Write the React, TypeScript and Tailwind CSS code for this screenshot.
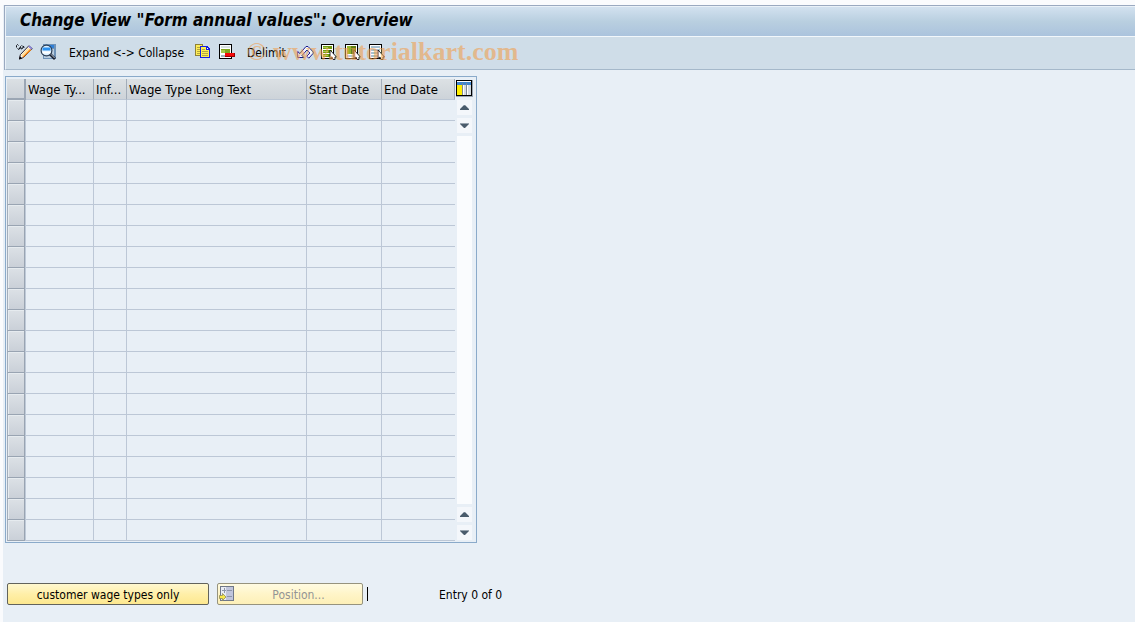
import type { ReactNode } from "react";

const columns = [
  { label: "Wage Ty...", width: "w-[68px]" },
  { label: "Inf...", width: "w-[33px]" },
  { label: "Wage Type Long Text", width: "w-[180px]" },
  { label: "Start Date", width: "w-[75px]" },
  { label: "End Date", width: "w-[73px]" },
];

const rows = Array.from({ length: 21 }, (_, i) => i);

function Icon({ children }: { children: ReactNode }) {
  return (
    <svg width="16" height="16" viewBox="0 0 16 16" shapeRendering="crispEdges" aria-hidden="true" className="block shrink-0">
      {children}
    </svg>
  );
}

function ChangeIcon() {
  return (
    <svg width="17" height="16" viewBox="0 0 17 16" aria-hidden="true" className="block shrink-0">
      <path d="M.5 3.500v-2l1-1 1 1M1.500 4.500l1.500 1 1.500-3 .5 2.500 1.500-.5 1-2.500L8 4M5.500 1.500l1 .5" fill="none" stroke="#10141c" />
      <path d="M3.500 15l.8-4.300L12.800 1.800l3.400 2.700-8.700 9z" fill="#fff" stroke="#2a2030" strokeWidth="1" />
      <path d="M6.300 12.800l7.500-7.900 1.500 1L7.300 13.600z" fill="#ff8c10" />
      <path d="M4.900 11.300l7.300-7.600 1.300 1.100-7.200 7.500z" fill="#ffdf98" />
      <path d="M12.300 3l1.200-1.500L16.200 4 15 5.400z" fill="#8c88dc" />
      <path d="M3 15.500l.8-3.200 2.400 2z" fill="#000" />
    </svg>
  );
}

function DetailIcon() {
  return (
    <svg width="16" height="16" viewBox="0 0 16 16" aria-hidden="true" className="block shrink-0">
      <path d="M3 0h13v15H3z" fill="#6f93b8" />
      <path d="M4 1h10v3H4z" fill="#2f7fd6" />
      <path d="M4 5h10v9H4z" fill="#b9cddf" />
      <circle cx="6.500" cy="6.500" r="5.400" fill="#d9efff" stroke="#2c3e54" strokeWidth="1.200" />
      <path d="M2.500 3.500h8v3h-8z" fill="#2c92f0" />
      <path d="M2.500 7.500h8v2h-8z" fill="#fff" />
      <path d="M10.200 10.200l4.800 4.800" stroke="#141c2c" strokeWidth="2.800" />
      <path d="M10.800 10.200l4 4" stroke="#eef6ff" strokeWidth=".8" />
    </svg>
  );
}

function CopyIcon() {
  return (
    <Icon>
      <path d="M0 0h8v12H0z" fill="#8f8238" />
      <path d="M1 1h6v10H1z" fill="#ffee58" />
      <path d="M2 3h3v1H2zM2 5h3v1H2zM2 7h3v1H2zM2 9h3v1H2z" fill="#b5a63c" />
      <path d="M5 2h7l3 3v9H5z" fill="#1520e0" />
      <path d="M6 3h5v3h3v7H6z" fill="#fff04c" />
      <path d="M12 4h1v1h-1z" fill="#fff" />
      <path d="M7 5h3v1H7zM7 7h6v1H7zM7 9h6v1H7zM7 11h6v1H7z" fill="#b0a648" />
    </Icon>
  );
}

function DeleteIcon() {
  return (
    <Icon>
      <path d="M0 0h13v15H0z" />
      <path d="M1 1h11v13H1z" fill="#fff" />
      <path d="M2 2h9v2H2z" fill="#d7e0e0" />
      <path d="M2 5h9v4H2z" fill="#7fa61e" />
      <path d="M2 6h4v3H2z" fill="#a6c94a" />
      <path d="M2 11h4v2H2z" fill="#9eb4bc" />
      <path d="M6 9h10v4H6z" fill="#900" />
      <path d="M6 9h9v3H6z" fill="#f50a0a" />
    </Icon>
  );
}

function UndoIcon() {
  return (
    <svg width="17" height="16" viewBox="0 0 17 16" aria-hidden="true" className="block shrink-0">
      <path
        d="M.7 7.500v6h6.300L5 11.500 9.900 6l3 3-3.100 3.200 2 2L16.300 9.200V8L11 2.500H9L2.900 9.500z"
        fill="#f4f6fc"
        stroke="#16188c"
      />
    </svg>
  );
}

function Pointer() {
  return <path d="M9 6v8.500l2-1.500 1 2.500h2V13h1.500z" fill="#fff" stroke="#111" strokeWidth=".9" shapeRendering="auto" />;
}

function Sheet() {
  return (
    <>
      <path d="M0 0h13v15H0z" />
      <path d="M1 1h11v13H1z" fill="#fff" />
    </>
  );
}

function SelectAllIcon() {
  return (
    <Icon>
      <Sheet />
      <path d="M2 2h9v3H2zM2 6h9v3H2zM2 10h9v3H2z" fill="#6f9a10" />
      <path d="M2 3h5v1H2zM2 7h5v1H2zM2 11h5v1H2z" fill="#a9cf55" />
      <Pointer />
    </Icon>
  );
}

function SelectBlockIcon() {
  return (
    <Icon>
      <Sheet />
      <path d="M2 2h9v8H2z" fill="#5f7e10" />
      <path d="M2 2h4v8H2z" fill="#94b42c" />
      <path d="M2 11h9v2H2z" fill="#b6cbd8" />
      <Pointer />
    </Icon>
  );
}

function DeselectIcon() {
  return (
    <Icon>
      <Sheet />
      <path d="M2 2h9v2H2zM2 5h9v2H2zM2 8h9v2H2zM2 11h9v2H2z" fill="#a6bfd0" />
      <Pointer />
    </Icon>
  );
}

function ConfigureIcon() {
  return (
    <Icon>
      <path d="M0 0h16v16H0z" />
      <path d="M1 1h14v14H1z" fill="#fff" />
      <path d="M1 2h14v3H1z" fill="#3f86d0" />
      <path d="M1 5h5v10H1z" fill="#ffee00" />
      <path d="M6 3h1v12H6zM10 3h1v12h-1z" fill="#7d8894" />
      <path d="M8 5h2v10H8zM12 5h3v10h-3z" fill="#d4dbe2" />
    </Icon>
  );
}

function PositionIcon() {
  return (
    <Icon>
      <path d="M1 0h14v15H1z" fill="#707888" />
      <path d="M2 1h12v13H2z" fill="#c0c5dc" />
      <path d="M2 1h5v13H2z" fill="#e8ecf4" />
      <path d="M3 4h4v1H3zM8 4h5v1H8zM8 10h5v1H8zM5 2h1v5H5z" fill="#8d95a9" />
      <path d="M.5 9.500h3v-2l3.500 3.500-3.500 3.500v-2h-3z" fill="#f7e84a" stroke="#8f8a58" strokeWidth=".8" shapeRendering="auto" />
    </Icon>
  );
}

function ToolButton({ label, children }: { label: string; children: ReactNode }) {
  return (
    <button type="button" aria-label={label} className="flex h-4 w-4 shrink-0 items-center">
      {children}
    </button>
  );
}

function ScrollButton({ up, label }: { up?: boolean; label: string }) {
  return (
    <button type="button" aria-label={label} className="flex h-[15px] w-[15px] shrink-0 items-center justify-center bg-[#f4f7fb]">
      <svg width="9" height="5" viewBox="0 0 9 5" aria-hidden="true">
        <path d={up ? "M0 5V4l4-4h1l4 4v1z" : "M0 0v1l4 4h1l4-4V0z"} fill="#4a5c6c" />
        <path d={up ? "M0 4l4-4h1l4 4" : "M0 .500h9"} fill="none" stroke="#a9b4be" strokeWidth=".8" />
      </svg>
    </button>
  );
}

export default function App() {
  return (
    <div className="min-h-screen bg-[#fafbfd] pl-[3px] pt-[5px] font-['DejaVu_Sans_Condensed','DejaVu_Sans',sans-serif] text-[12px] leading-4 text-black">
      <div className="min-h-[617px] bg-[#e8eff6] pl-px">
        <header className="border-l border-t border-[#9aa9c0]">
          <div className="flex h-[30px] items-center border-l border-t border-[#e9f1f8] bg-linear-to-b from-[#d2e1ef] via-[#b9cfe0] to-[#abc3dd] pb-1 pl-[14px]">
            <h1 className="text-[17px] font-bold italic leading-5">Change View "Form annual values": Overview</h1>
          </div>
          <div
            role="toolbar"
            className="relative flex h-[34px] items-center border-b border-l border-t border-b-[#a5b8ca] border-l-[#e9f1f8] border-t-[#f2f7fb] bg-[#cfdde8] pb-[2px] pl-[10px]"
          >
            <div className="flex items-center gap-2">
              <ToolButton label="Display/Change"><ChangeIcon /></ToolButton>
              <ToolButton label="Details"><DetailIcon /></ToolButton>
            </div>
            <button type="button" className="ml-[13px] w-[114px] whitespace-nowrap pt-[2px] text-left">Expand &lt;-&gt; Collapse</button>
            <div className="ml-3 flex items-center gap-2">
              <ToolButton label="Copy As"><CopyIcon /></ToolButton>
              <ToolButton label="Delete"><DeleteIcon /></ToolButton>
            </div>
            <button type="button" className="ml-3 w-[38px] whitespace-nowrap pt-[2px] text-left">Delimit</button>
            <div className="ml-3 flex items-center gap-2">
              <ToolButton label="Undo"><UndoIcon /></ToolButton>
              <ToolButton label="Select All"><SelectAllIcon /></ToolButton>
              <ToolButton label="Select Block"><SelectBlockIcon /></ToolButton>
              <ToolButton label="Deselect All"><DeselectIcon /></ToolButton>
            </div>
            <span className="pointer-events-none absolute left-[241px] top-px whitespace-nowrap font-['Liberation_Serif',serif] text-[26px] font-bold leading-7 text-[#f0a050]/60">
              © www.tutorialkart.com
            </span>
          </div>
        </header>

        <main className="pl-px pt-[6px]">
          <div className="flex w-fit border border-[#8aaaca] pb-px pl-px pr-[3px] pt-[2px]">
            <table className="w-[448px] table-fixed border-separate border-spacing-0">
              <thead>
                <tr className="h-[21px]">
                  <th scope="col" aria-label="Selection" className="w-[19px] border-b-2 border-r-2 border-[#9ba6b4] bg-linear-to-b from-[#dbe0e4] to-[#cbd1d8] p-0" />
                  {columns.map((c) => (
                    <th
                      key={c.label}
                      scope="col"
                      className={`${c.width} overflow-hidden whitespace-nowrap border-b border-r border-b-[#bcc7d5] border-r-[#a3adb9] bg-linear-to-b from-[#dce1e4] to-[#cdd3d9] p-0 pl-[2px] pt-px text-left text-[13px] font-normal leading-4`}
                    >
                      {c.label}
                    </th>
                  ))}
                </tr>
              </thead>
              <tbody>
                {rows.map((r) => (
                  <tr key={r} className="h-[21px]">
                    <td className="border-r border-[#bfcad8] p-0">
                      <button
                        type="button"
                        aria-label={`Select row ${r + 1}`}
                        className="block h-[21px] w-full border-b border-l border-r border-b-[#99a4b2] border-l-[#a3adba] border-r-[#99a4b2] bg-linear-to-b from-[#dce1e6] to-[#cad0d8] shadow-[inset_1px_1px_0_#e6ebef]"
                      />
                    </td>
                    {columns.map((c, i) => (
                      <td
                        key={c.label}
                        className={`border-b border-[#bcc7d6] p-0 ${i < columns.length - 1 ? "border-r" : ""}`}
                      />
                    ))}
                  </tr>
                ))}
              </tbody>
            </table>
            <div className="ml-px flex w-[17px] flex-col items-center">
              <button type="button" aria-label="Table settings" className="mt-px h-[17px] w-[17px] shrink-0 border-b border-r border-[#99a4b2]">
                <ConfigureIcon />
              </button>
              <div className="mb-px mt-[3px] flex w-[15px] flex-1 flex-col gap-[3px]">
                <ScrollButton up label="Scroll up" />
                <ScrollButton label="Scroll down" />
                <div className="flex-1 bg-[#fafcfe]" />
                <ScrollButton up label="Page up" />
                <ScrollButton label="Page down" />
              </div>
            </div>
          </div>

          <div className="mt-10 flex items-center pl-[2px]">
            <button
              type="button"
              className="h-[22px] w-[202px] rounded-[2px] border border-[#62635c] bg-linear-to-b from-[#fff8cf] via-[#ffefa8] to-[#fde88f] pt-px leading-5"
            >
              customer wage types only
            </button>
            <button
              type="button"
              disabled
              className="ml-2 flex h-[22px] w-[146px] items-center rounded-[2px] border border-[#96937e] bg-linear-to-b from-[#fffbe2] via-[#fff5c8] to-[#fdf0b8] pl-px text-[#949494]"
            >
              <PositionIcon />
              <span className="flex-1 pt-px text-center">Position...</span>
            </button>
            <span className="ml-1 h-[14px] w-px bg-black" />
            <span className="ml-[71px] pt-px">Entry 0 of 0</span>
          </div>
        </main>
      </div>
    </div>
  );
}
